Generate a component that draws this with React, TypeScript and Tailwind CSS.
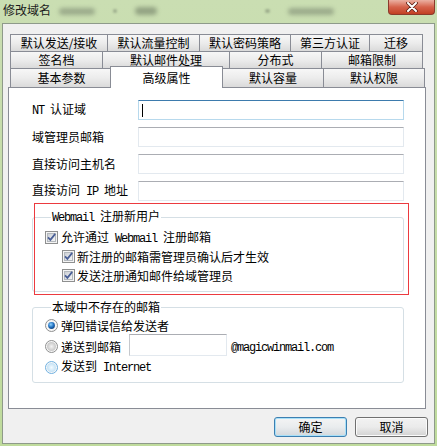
import React from 'react';

const cjk = "font-['Noto_Sans_CJK_SC',sans-serif]";

// ASCII runs in the dialog use a narrow fixed-width face
function A({ children }: { children: React.ReactNode }) {
  return (
    <span className="font-['Liberation_Mono',monospace] text-[12px] tracking-[-1.2px]">{children}</span>
  );
}

function CheckBox() {
  return (
    <svg width="13" height="13" viewBox="0 0 13 13" className="shrink-0">
      <defs>
        <linearGradient id="cbg" x1="0" y1="0" x2="1" y2="1">
          <stop offset="0" stopColor="#c9cdd3" />
          <stop offset="1" stopColor="#f8f8f8" />
        </linearGradient>
      </defs>
      <rect x="0.5" y="0.5" width="12" height="12" fill="#f4f4f4" stroke="#8e8f8f" />
      <rect x="2.5" y="2.5" width="8" height="8" fill="url(#cbg)" stroke="#b3b8bd" />
      <path d="M3 6.3 L5.4 8.9 L10.2 2.9" fill="none" stroke="#4a5f97" strokeWidth="1.7" />
    </svg>
  );
}

function Radio({ kind }: { kind: 'on' | 'off' | 'hover' }) {
  return (
    <svg width="13" height="13" viewBox="0 0 13 13" className="shrink-0">
      <defs>
        <radialGradient id="rdot" cx="0.4" cy="0.35" r="0.7">
          <stop offset="0" stopColor="#8fd3ff" />
          <stop offset="0.6" stopColor="#1f6fbf" />
          <stop offset="1" stopColor="#0d3f7a" />
        </radialGradient>
        <radialGradient id="roff" cx="0.5" cy="0.5" r="0.6">
          <stop offset="0" stopColor="#f3f3f3" />
          <stop offset="1" stopColor="#bdbdbd" />
        </radialGradient>
        <radialGradient id="rhov" cx="0.5" cy="0.5" r="0.6">
          <stop offset="0" stopColor="#f4fbff" />
          <stop offset="1" stopColor="#b9dcf3" />
        </radialGradient>
      </defs>
      <circle cx="6.5" cy="6.5" r="6" fill="#f6f6f6" stroke={kind === 'hover' ? '#6fb0e0' : '#8e8f8f'} />
      {kind === 'on' && <circle cx="6.5" cy="6.5" r="3.4" fill="url(#rdot)" />}
      {kind === 'off' && <circle cx="6.5" cy="6.5" r="4.5" fill="url(#roff)" />}
      {kind === 'hover' && <circle cx="6.5" cy="6.5" r="4.5" fill="url(#rhov)" />}
    </svg>
  );
}

function Tab({ label, w, first }: { label: string; w: string; first?: boolean }) {
  return (
    <div
      className={`${w} ${first ? '' : '-ml-px'} h-full shrink-0 border border-b-0 border-[#898c95] bg-linear-to-b from-[#f7f7f7] via-[#ececec] to-[#dadada] flex items-center justify-center text-[12px] leading-[14px] text-black`}
    >
      {label}
    </div>
  );
}

function Field({ label, focused }: { label: React.ReactNode; focused?: boolean }) {
  return (
    <div className="flex items-center h-[20px]">
      <div className="w-[106px] text-[12px] leading-[14px] text-black">{label}</div>
      <div
        className={
          focused
            ? 'w-[266px] h-[20px] border border-[#b7d9ed] border-t-[#3d7bad] bg-white flex items-center pl-[3px]'
            : 'w-[266px] h-[20px] border border-[#e3e9ef] border-t-[#abadb3] bg-white'
        }
      >
        {focused && <div className="w-px h-[13px] bg-black" />}
      </div>
    </div>
  );
}

export default function App() {
  return (
    <div className={`${cjk} w-[437px] h-[446px] flex flex-col bg-linear-to-b from-[#cadeb2] to-[#bfdb9c] overflow-hidden`}>
      {/* Title bar */}
      <div className="h-[23px] flex items-start shrink-0">
        <div className="pl-[3px] pt-[3px] text-[12px] leading-[14px] text-[#1b1b1b]">修改域名</div>
        <div className="flex items-center gap-[18px] pt-[7px] ml-[8px] opacity-50">
          <span className="w-[36px] h-[7px] rounded bg-[#6e7a66] blur-[2px]" />
          <span className="w-[4px] h-[4px] rounded bg-[#6e7a66] blur-[1px]" />
          <span className="w-[22px] h-[8px] rounded bg-[#5e6a56] blur-[2px]" />
          <span className="w-[5px] h-[4px] ml-[90px] rounded bg-[#6e7a66] blur-[1px]" />
          <span className="w-[46px] h-[7px] rounded bg-[#6e7a66] blur-[2px]" />
        </div>
        <div className="ml-auto mr-[2px] w-[47px] h-[15px] rounded-b-[4px] border border-t-0 border-[#8b3a2c] bg-linear-to-b from-[#eab0a2] via-[#d5624b] to-[#c23f22] flex items-center justify-center">
          <svg width="14" height="10" viewBox="0 0 14 10">
            <path d="M3 1 L11 9 M11 1 L3 9" stroke="#5b1f14" strokeWidth="3.6" strokeLinecap="round" />
            <path d="M3 1 L11 9 M11 1 L3 9" stroke="#ffffff" strokeWidth="2" strokeLinecap="round" />
          </svg>
        </div>
      </div>

      {/* Client area */}
      <div className="mx-[2px] mb-[2px] flex-1 border border-[#8e9a8a] bg-[#f0f0f0] flex flex-col px-[5px] pt-[10px]">
        {/* Tab headers */}
        <div className="flex flex-col">
          <div className="flex h-[17px] ml-[2px]">
            <Tab first label="默认发送/接收" w="w-[98px]" />
            <Tab label="默认流量控制" w="w-[93px]" />
            <Tab label="默认密码策略" w="w-[92px]" />
            <Tab label="第三方认证" w="w-[80px]" />
            <Tab label="迁移" w="w-[54px]" />
          </div>
          <div className="flex h-[17px] ml-[2px]">
            <Tab first label="签名档" w="w-[93px]" />
            <Tab label="默认邮件处理" w="w-[128px]" />
            <Tab label="分布式" w="w-[93px]" />
            <Tab label="邮箱限制" w="w-[102px]" />
          </div>
          <div className="flex items-end h-[19px] ml-[2px]">
            <Tab first label="基本参数" w="w-[103px]" />
            <div className="-ml-px -mr-[2px] -mb-px relative z-10 w-[113px] -translate-x-[2px] h-[22px] shrink-0 border border-b-0 border-[#898c95] bg-white flex items-center justify-center text-[12px] leading-[14px] text-black">
              高级属性
            </div>
            <Tab label="默认容量" w="w-[102px]" />
            <Tab label="默认权限" w="w-[102px]" />
          </div>
        </div>

        {/* Panel */}
        <div className="w-[418px] h-[322px] border border-[#898c95] bg-white pl-[23px] pt-[12px] flex flex-col">
          <div className="flex flex-col gap-[7px]">
            <Field focused label={<><A>NT </A>认证域</>} />
            <Field label="域管理员邮箱" />
            <Field label="直接访问主机名" />
            <Field label={<>直接访问<A> IP </A>地址</>} />
          </div>

          {/* Webmail group with red highlight */}
          <div className="relative mt-[8px] w-[372px]">
            <fieldset className="border border-[#d5dfe5] rounded-[3px] pl-[12px] pt-[3px] pb-[6px]">
              <legend className="ml-[6px] px-[1px] text-[12px] leading-[14px] text-black">
                <A>Webmail </A>注册新用户
              </legend>
              <div className="flex items-center h-[19px] gap-[3px] text-[12px] leading-[14px] text-black">
                <CheckBox />
                <span>允许通过<A> Webmail </A>注册邮箱</span>
              </div>
              <div className="flex items-center h-[19px] gap-[2px] pl-[17px] text-[12px] leading-[14px] text-black">
                <CheckBox />
                <span>新注册的邮箱需管理员确认后才生效</span>
              </div>
              <div className="flex items-center h-[19px] gap-[2px] pl-[17px] text-[12px] leading-[14px] text-black">
                <CheckBox />
                <span>发送注册通知邮件给域管理员</span>
              </div>
            </fieldset>
            <div className="absolute -top-[6px] left-[2px] -right-[5px] -bottom-[3px] border border-[#ec3a3f] pointer-events-none" />
          </div>

          {/* Missing mailbox group */}
          <fieldset className="mt-[8px] w-[372px] border border-[#d5dfe5] rounded-[3px] pl-[12px] pt-[1px] pb-[5px]">
            <legend className="ml-[6px] px-[1px] text-[12px] leading-[14px] text-black">本域中不存在的邮箱</legend>
            <div className="flex items-center h-[21px] gap-[3px] text-[12px] leading-[14px] text-black">
              <Radio kind="on" />
              <span>弹回错误信给发送者</span>
            </div>
            <div className="flex items-center h-[21px] gap-[3px] text-[12px] leading-[14px] text-black">
              <Radio kind="off" />
              <span>递送到邮箱</span>
              <div className="ml-[5px] mb-[4px] w-[98px] h-[22px] border border-[#e3e9ef] border-t-[#abadb3] border-l-[#c5c8cd] bg-white" />
              <span className="ml-[1px]">
                <A>@magicwinmail.com</A>
              </span>
            </div>
            <div className="flex items-center h-[20px] gap-[3px] text-[12px] leading-[14px] text-black">
              <Radio kind="hover" />
              <span>发送到<A> Internet</A></span>
            </div>
          </fieldset>
        </div>

        {/* Buttons */}
        <div className="flex justify-end gap-[8px] mt-[8px] mr-px">
          <button className="w-[73px] h-[20px] rounded-[3px] border border-[#3c7fb1] shadow-[inset_0_0_0_1px_#a8e0f8] bg-linear-to-b from-[#f4f4f4] via-[#e9ecee] to-[#d3d8dc] text-[12px] leading-[14px] text-black">
            确定
          </button>
          <button className="w-[73px] h-[20px] rounded-[3px] border border-[#707070] shadow-[inset_0_0_0_1px_#fbfbfb] bg-linear-to-b from-[#f2f2f2] via-[#ebebeb] to-[#d2d2d2] text-[12px] leading-[14px] text-black">
            取消
          </button>
        </div>
      </div>
    </div>
  );
}
